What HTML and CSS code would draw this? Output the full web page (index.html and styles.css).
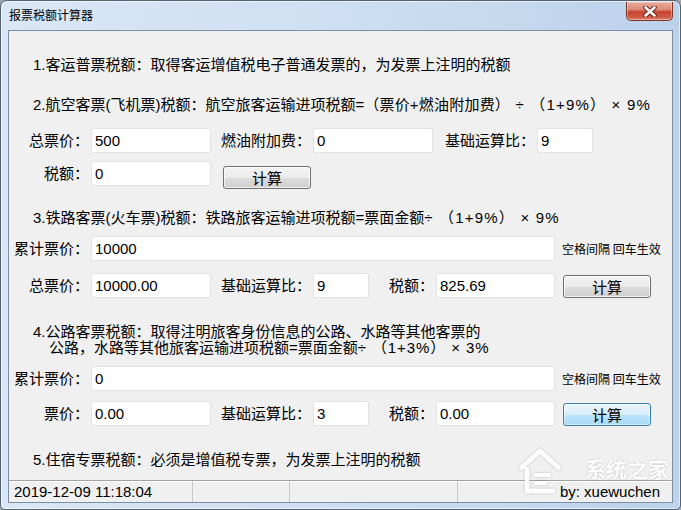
FILE: index.html
```html
<!DOCTYPE html>
<html lang="zh-CN">
<head>
<meta charset="utf-8">
<title>报票税额计算器</title>
<link rel="stylesheet" href="styles.css">
</head>
<body>
<div class="window">
  <div class="titlebar">
    <span class="title">报票税额计算器</span>
    <div class="close">
      <svg width="14" height="11" viewBox="0 0 14 11">
        <path d="M2.5 1.5 L11.5 9.5 M11.5 1.5 L2.5 9.5" stroke="#6b2217" stroke-width="4.6" stroke-linecap="round" fill="none"/>
        <path d="M2.5 1.5 L11.5 9.5 M11.5 1.5 L2.5 9.5" stroke="#ffffff" stroke-width="2.6" stroke-linecap="round" fill="none"/>
      </svg>
    </div>
  </div>
  <div class="client">
    <div class="content">
      <p class="line l1">1.客运普票税额：取得客运增值税电子普通发票的，为发票上注明的税额</p>
      <p class="line l2">2.航空客票(飞机票)税额：航空旅客运输进项税额=<span class="f1">（票价+燃油附加费）</span><span class="f"> ÷ （1+9%） × 9%</span></p>
      <div class="row ra">
        <span class="lbl w82">总票价：</span><input class="in w120" value="500">
        <span class="lbl w102">燃油附加费：</span><input class="in w120" value="0">
        <span class="lbl w104">基础运算比：</span><input class="in w56" value="9">
      </div>
      <div class="row rb">
        <span class="lbl w82">税额：</span><input class="in w120" value="0">
        <button class="btn btn-b">计算</button>
      </div>
      <p class="line l3">3.铁路客票(火车票)税额：铁路旅客运输进项税额=票面金额<span class="f">÷ （1+9%） × 9%</span></p>
      <div class="row rc">
        <span class="lbl w82">累计票价：</span><input class="in w464" value="10000">
        <span class="hint">空格间隔 回车生效</span>
      </div>
      <div class="row rd">
        <span class="lbl w82">总票价：</span><input class="in w120" value="10000.00">
        <span class="lbl w102">基础运算比：</span><input class="in w56" value="9">
        <span class="lbl w67">税额：</span><input class="in w119" value="825.69">
        <button class="btn btn-d">计算</button>
      </div>
      <p class="line l4">4.公路客票税额：取得注明旅客身份信息的公路、水路等其他客票的<br><span class="indent">公路，水路等其他旅客运输进项税额=票面金额<span class="f f4">÷ （1+3%） × 3%</span></span></p>
      <div class="row re">
        <span class="lbl w82">累计票价：</span><input class="in w464" value="0">
        <span class="hint">空格间隔 回车生效</span>
      </div>
      <div class="row rf">
        <span class="lbl w82">票价：</span><input class="in w120" value="0.00">
        <span class="lbl w102">基础运算比：</span><input class="in w56" value="3">
        <span class="lbl w67">税额：</span><input class="in w119" value="0.00">
        <button class="btn btn-d focus">计算</button>
      </div>
      <p class="line l5">5.住宿专票税额：必须是增值税专票，为发票上注明的税额</p>
    </div>
    <div class="status">
      <div class="seg s1">2019-12-09 11:18:04</div>
      <div class="seg s2"></div>
      <div class="seg s3"></div>
      <div class="seg s4">by: xuewuchen</div>
    </div>
  </div>
  <div class="watermark">
    <svg class="wm-logo" width="46" height="52" viewBox="0 0 46 52">
      <path d="M3 24 L23 6 L43 24" stroke="#ffffff" stroke-width="5" fill="none" stroke-linejoin="round"/>
      <path d="M10 22 V46 H38" stroke="#ffffff" stroke-width="5" fill="none"/>
      <path d="M17 30 H34 M17 38 H30" stroke="#ffffff" stroke-width="4" fill="none"/>
    </svg>
    <span class="wm-text">系统之家</span>
  </div>
</div>
</body>
</html>
```
FILE: styles.css
```css
* { box-sizing: border-box; }
html, body { margin: 0; padding: 0; }
body {
  width: 681px;
  height: 510px;
  overflow: hidden;
  background: #9ea7b1;
  font-family: "Liberation Sans", "Noto Sans CJK SC", sans-serif;
  color: #000;
}
.window {
  position: relative;
  width: 681px;
  height: 510px;
  display: flex;
  flex-direction: column;
  border: 1px solid #56626f;
  border-radius: 7px 7px 5px 5px;
  background: linear-gradient(to right, #d9e7f6 0%, #cfe0f3 45%, #bcd2eb 100%);
  box-shadow: inset 0 0 0 1px rgba(255, 255, 255, 0.6);
}
.titlebar {
  height: 29px;
  flex: none;
  display: flex;
  align-items: flex-start;
  justify-content: space-between;
  padding: 0 7px 0 8px;
}
.title {
  margin-top: 7px;
  font-family: "Noto Sans CJK SC", sans-serif;
  font-size: 12px;
  line-height: 14px;
}
.close {
  width: 47px;
  height: 19px;
  margin-top: 1px;
  border: 1px solid #7e3428;
  border-top: none;
  border-radius: 0 0 5px 5px;
  background: linear-gradient(#eaa998 0%, #dc8f7d 40%, #c7442f 55%, #cf5a45 85%, #e08a74 100%);
  box-shadow: inset 0 0 0 1px rgba(255, 255, 255, 0.35);
  display: flex;
  align-items: center;
  justify-content: center;
}
.client {
  margin: 0 7px;
  height: 473px;
  flex: none;
  border: 1px solid #7d8ea3;
  background: #f0f0f0;
  display: flex;
  flex-direction: column;
}
.content {
  flex: 1;
  padding-top: 25px;
}
.line {
  margin: 0;
  padding-left: 24px;
  font-size: 15px;
  line-height: 18px;
  white-space: nowrap;
}
.l2 { margin-top: 22px; }
.l3 { margin-top: 20px; }
.l4 { margin-top: 26px; line-height: 16px; }
.l5 { margin-top: 25px; }
.indent { padding-left: 16px; }
.f { letter-spacing: 1.2px; }
.f4 { letter-spacing: 0.9px; }
.f1 { letter-spacing: 0.2px; }

.row {
  display: flex;
  align-items: flex-start;
}
.ra { margin-top: 14px; }
.rb { margin-top: 8px; }
.rc { margin-top: 9px; }
.rd { margin-top: 12px; }
.re { margin-top: 10px; }
.rf { margin-top: 10px; }

.lbl {
  flex: none;
  font-size: 15px;
  line-height: 25px;
  text-align: right;
  padding-right: 2px;
  white-space: nowrap;
}
.w82 { width: 82px; }
.w102 { width: 102px; }
.w104 { width: 104px; }
.w67 { width: 67px; }

.in {
  flex: none;
  height: 25px;
  margin: 0;
  padding: 0 0 0 3px;
  border: 1px solid #e3e3e3;
  border-radius: 2px;
  background: #fff;
  font: 15px "Liberation Sans", "Noto Sans CJK SC", sans-serif;
  color: #000;
  outline: none;
}
input.w120 { width: 120px; }
input.w119 { width: 119px; }
input.w56 { width: 56px; }
input.w464 { width: 464px; }

.hint {
  margin-left: 7px;
  font-family: "Noto Sans CJK SC", sans-serif;
  font-size: 12px;
  line-height: 25px;
  white-space: nowrap;
}

.btn {
  flex: none;
  width: 88px;
  height: 23px;
  padding: 0;
  border: 1px solid #707070;
  border-radius: 3px;
  background: linear-gradient(#f3f3f3 0%, #ebebeb 50%, #dddddd 51%, #cfcfcf 100%);
  box-shadow: inset 0 0 0 1px rgba(255, 255, 255, 0.7);
  font: 15px "Noto Sans CJK SC", sans-serif;
  line-height: 21px;
  color: #000;
}
.btn-b { margin-left: 12px; margin-top: 5px; }
.btn-d { margin-left: 8px; margin-top: 2px; }
.btn.focus {
  border-color: #3c7fb1;
  background: linear-gradient(#e9f5fc 0%, #d9effb 50%, #bee5fb 51%, #a8d8f3 100%);
  box-shadow: inset 0 0 0 1px rgba(255, 255, 255, 0.5);
}

.status {
  flex: none;
  height: 22px;
  display: flex;
  border-top: 1px solid #a3a3a3;
  box-shadow: inset 0 1px 0 #ffffff;
  font-size: 15px;
  line-height: 21px;
  white-space: nowrap;
}
.seg {
  border-right: 1px solid #c9c9c9;
}
.s1 { width: 184px; padding-left: 5px; }
.s2 { width: 97px; }
.s3 { width: 168px; }
.s4 { flex: 1; border-right: none; text-align: right; padding-right: 12px; }

.watermark {
  position: absolute;
  left: 516px;
  top: 444px;
  display: flex;
  align-items: flex-start;
  opacity: 0.92;
  pointer-events: none;
}
.wm-logo {
  filter: drop-shadow(0 0 1px rgba(0, 0, 0, 0.25));
}
.wm-text {
  margin-left: 22px;
  margin-top: 12px;
  font-family: "Noto Sans CJK SC", sans-serif;
  font-weight: 700;
  font-size: 21px;
  line-height: 22px;
  color: #ffffff;
  text-shadow: 0 0 2px rgba(0, 0, 0, 0.25);
}
```
